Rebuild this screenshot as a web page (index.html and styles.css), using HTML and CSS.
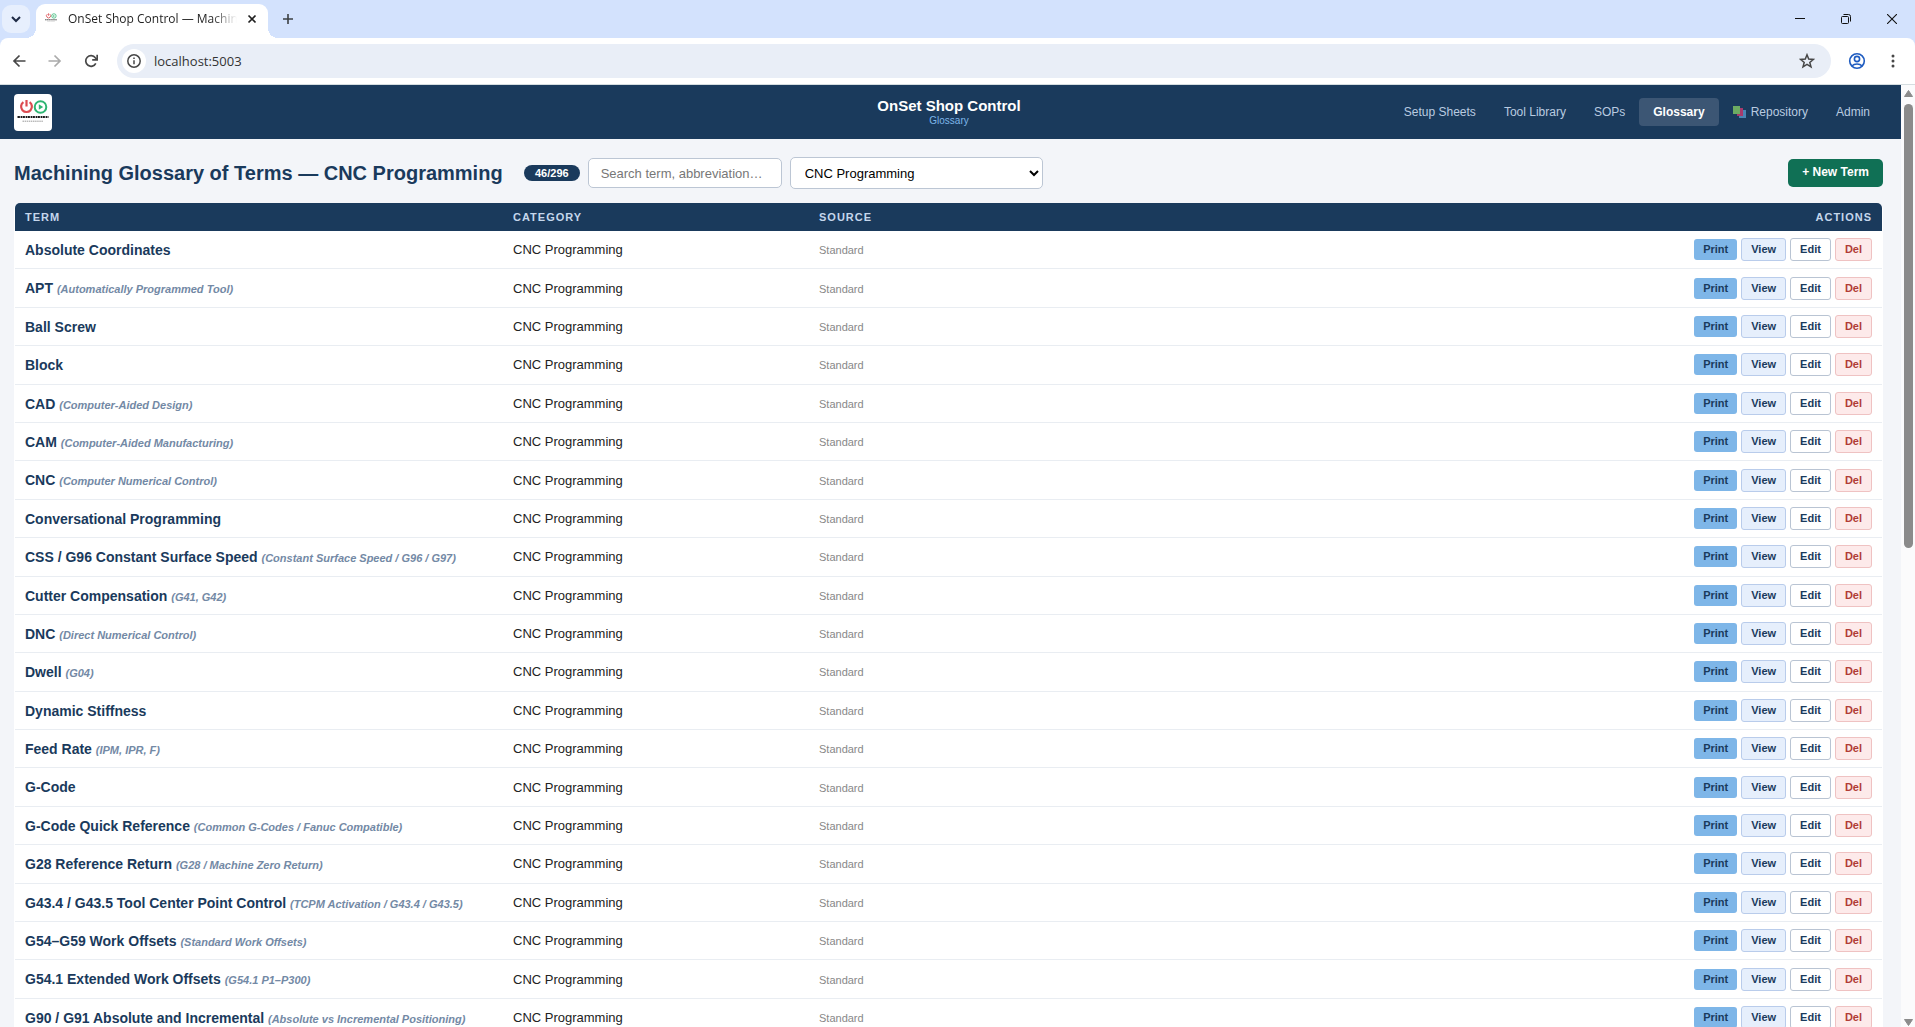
FILE: index.html
```html
<!DOCTYPE html>
<html lang="en">
<head>
<meta charset="utf-8">
<title>OnSet Shop Control — Machining Glossary</title>
<link rel="stylesheet" href="styles.css">
</head>
<body>
<svg class="defs" aria-hidden="true">
  <symbol id="logo" viewBox="0 0 38 37">
    <path d="M9.400 8.200a5.400 5.400 0 1 0 6.200 0" fill="none" stroke="#dc4b50" stroke-width="2.200"/>
    <path d="M12.500 6v6.500" stroke="#dc4b50" stroke-width="2.200"/>
    <circle cx="26.500" cy="13" r="5.800" fill="none" stroke="#2fb573" stroke-width="2"/>
    <path d="M24.800 10.200v5.600l4.400-2.800z" fill="#2fb573"/>
    <path d="M3.500 23h31" stroke="#1c1c1c" stroke-width="2.200" stroke-dasharray="2.400 .7 1.400 .5"/>
    <path d="M8.500 27.200h21" stroke="#999" stroke-width="1" stroke-dasharray="1.500 .6"/>
  </symbol>
</svg>

<div class="tabstrip">
  <button class="tab-search" aria-label="Search tabs"><svg width="12" height="12" viewBox="0 0 12 12"><path d="M2 4l4 4 4-4" fill="none" stroke="#1f2b45" stroke-width="2"/></svg></button>
  <div class="tab">
    <svg class="favicon" viewBox="2 2 34 30"><use href="#logo"/></svg>
    <span class="tab-title">OnSet Shop Control — Machining Glossary</span>
    <button class="icon-btn tab-close" aria-label="Close tab"><svg width="10" height="10" viewBox="0 0 10 10"><path d="M1.500 1.500l7 7M8.500 1.500l-7 7" stroke="#1f1f1f" stroke-width="1.700"/></svg></button>
  </div>
  <button class="icon-btn new-tab" aria-label="New tab"><svg width="12" height="12" viewBox="0 0 12 12"><path d="M6 1v10M1 6h10" stroke="#3c4043" stroke-width="1.600"/></svg></button>
  <div class="window-controls">
    <button class="icon-btn" aria-label="Minimize"><svg width="10" height="10" viewBox="0 0 10 10"><path d="M0 4.500h10" stroke="#111"/></svg></button>
    <button class="icon-btn" aria-label="Restore"><svg width="10" height="10" viewBox="0 0 10 10" fill="none" stroke="#111"><rect x=".5" y="2.500" width="7" height="7" rx="1"/><path d="M2.500 .5h5a2 2 0 0 1 2 2v5"/></svg></button>
    <button class="icon-btn" aria-label="Close"><svg width="10" height="10" viewBox="0 0 10 10"><path d="M0 0l10 10M10 0L0 10" stroke="#111" stroke-width="1.100"/></svg></button>
  </div>
</div>

<div class="toolbar">
  <button class="icon-btn" aria-label="Back"><svg width="14" height="14" viewBox="0 0 14 14"><path d="M13.500 7H2M7.500 1.500L2 7l5.500 5.500" fill="none" stroke="#474747" stroke-width="1.700"/></svg></button>
  <button class="icon-btn" aria-label="Forward"><svg width="14" height="14" viewBox="0 0 14 14"><path d="M.5 7H12M6.500 1.500L12 7l-5.500 5.500" fill="none" stroke="#ababab" stroke-width="1.700"/></svg></button>
  <button class="icon-btn" aria-label="Reload"><svg width="14" height="14" viewBox="0 0 14 14"><path d="M11.800 9.300A5.300 5.300 0 1 1 11.300 3.800L12.800 5.300" fill="none" stroke="#474747" stroke-width="1.700"/><path d="M13.200 .8v5h-5" fill="none" stroke="#474747" stroke-width="1.700"/></svg></button>
  <div class="omnibox">
    <span class="site-info"><svg width="14" height="14" viewBox="0 0 14 14"><circle cx="7" cy="7" r="6.200" fill="none" stroke="#474747" stroke-width="1.500"/><path d="M7 6.200v4M7 3.600v1.500" stroke="#474747" stroke-width="1.500"/></svg></span>
    <input class="url" type="text" aria-label="Address" value="localhost:5003">
    <button class="icon-btn" aria-label="Bookmark"><svg width="16" height="16" viewBox="0 0 16 16"><path d="M8 1.800l1.700 4.300 4.700.3-3.600 3 1.200 4.500L8 11.400l-4 2.500 1.200-4.500-3.600-3 4.700-.3z" fill="none" stroke="#474747" stroke-width="1.500"/></svg></button>
  </div>
  <button class="icon-btn" aria-label="Profile"><svg width="18" height="18" viewBox="0 0 18 18" fill="none" stroke="#1f5cc0" stroke-width="1.600"><circle cx="9" cy="9" r="7.300"/><circle cx="9" cy="7" r="2.600"/><path d="M3.800 14c2.700-2.700 7.700-2.700 10.400 0"/></svg></button>
  <button class="icon-btn menu-btn" aria-label="Menu"><svg width="4" height="14" viewBox="0 0 4 14" fill="#474747"><circle cx="2" cy="2" r="1.500"/><circle cx="2" cy="7" r="1.500"/><circle cx="2" cy="12" r="1.500"/></svg></button>
</div>

<div class="viewport">
  <div class="page">
    <header class="app-header">
      <a class="logo" href="#" aria-label="Home"><svg width="38" height="37"><use href="#logo"/></svg></a>
      <div class="brand"><strong>OnSet Shop Control</strong><span>Glossary</span></div>
      <nav class="nav">
        <a href="#">Setup Sheets</a>
        <a href="#">Tool Library</a>
        <a href="#">SOPs</a>
        <a href="#" class="active">Glossary</a>
        <a href="#"><svg width="13" height="12" viewBox="0 0 13 12"><path d="M6 4h7v8H6z" fill="#4b84b4"/><path d="M4 2h6v8H4z" fill="#a83a6c"/><path d="M0 0h7v8H0z" fill="#6cab62"/></svg>Repository</a>
        <a href="#">Admin</a>
      </nav>
    </header>
    <main class="content">
      <div class="filters">
        <h1>Machining Glossary of Terms — CNC Programming</h1>
        <span class="count">46/296</span>
        <input class="search" type="text" placeholder="Search term, abbreviation…" aria-label="Search terms">
        <select class="category" aria-label="Category"><option>CNC Programming</option></select>
        <button class="new-term">+ New Term</button>
      </div>
      <div class="table-wrap">
        <table>
          <colgroup><col class="col-term"><col class="col-category"><col><col></colgroup>
          <thead><tr><th>Term</th><th>Category</th><th>Source</th><th class="actions">Actions</th></tr></thead>
          <tbody id="terms"></tbody>
        </table>
      </div>
    </main>
  </div>
  <div class="scrollbar" aria-hidden="true">
    <svg width="9" height="7" viewBox="0 0 9 7"><path d="M4.500 0.500L8.500 6.500H.5z" fill="#8b8b8b" stroke="#8b8b8b" stroke-linejoin="round"/></svg>
    <div class="track"><div class="thumb"></div></div>
    <svg width="9" height="7" viewBox="0 0 9 7"><path d="M4.500 6.500L8.500 .5H.5z" fill="#8b8b8b" stroke="#8b8b8b" stroke-linejoin="round"/></svg>
  </div>
</div>
<script src="script.js"></script>
</body>
</html>
```
FILE: styles.css
```css
* { box-sizing: border-box; }

body {
  margin: 0;
  height: 100vh;
  display: flex;
  flex-direction: column;
  overflow: hidden;
  background: #d3e2fd;
  color: #222;
  font: 13px/1.6 "Liberation Sans", Arial, sans-serif;
}

button, input, select { font: inherit; }
.defs { position: absolute; width: 0; height: 0; }
svg { display: block; flex: none; }

/* Browser frame */
.icon-btn {
  display: grid;
  place-items: center;
  width: 36px;
  height: 34px;
  padding: 0;
  border: 0;
  background: none;
}
.tabstrip {
  display: flex;
  align-items: center;
  height: 38px;
  flex: none;
  padding-left: 2px;
}
.tab-search {
  display: grid;
  place-items: center;
  width: 28px;
  height: 28px;
  margin-right: 6px;
  padding: 0;
  border: 0;
  border-radius: 9px;
  background: #e7effd;
}
.tab {
  position: relative;
  display: flex;
  align-items: center;
  align-self: flex-end;
  width: 232px;
  height: 34px;
  padding: 0 7px 4px 8px;
  border-radius: 9px 9px 0 0;
  background: #fff;
}
.tab::before, .tab::after {
  content: "";
  position: absolute;
  bottom: 0;
  width: 10px;
  height: 10px;
}
.tab::before { left: -10px; background: radial-gradient(circle at 0 0, transparent 10px, #fff 10px); }
.tab::after { right: -10px; background: radial-gradient(circle at 100% 0, transparent 10px, #fff 10px); }
.favicon { width: 16px; height: 16px; margin-right: 8px; }
.tab-title {
  flex: 1;
  overflow: hidden;
  white-space: nowrap;
  color: #1f1f1f;
  font: 12px/20px "Open Sans", sans-serif;
  -webkit-mask-image: linear-gradient(90deg, #000 85%, transparent);
  mask-image: linear-gradient(90deg, #000 85%, transparent);
}
.tab-close { width: 18px; height: 18px; margin-left: 6px; }
.new-tab { margin-left: 2px; }
.window-controls { display: flex; margin-left: auto; }
.window-controls .icon-btn { width: 46px; }

.toolbar {
  display: flex;
  align-items: center;
  height: 47px;
  flex: none;
  padding: 0 4px 0 1px;
  border-bottom: 1px solid #d5dde0;
  border-radius: 8px 8px 0 0;
  background: #fff;
}
.omnibox {
  display: flex;
  align-items: center;
  flex: 1;
  height: 34px;
  margin: 0 8px;
  padding: 0 6px 0 5px;
  border-radius: 17px;
  background: #e9eef7;
}
.site-info {
  display: grid;
  place-items: center;
  width: 24px;
  height: 24px;
  border-radius: 50%;
  background: #fff;
}
.url {
  flex: 1;
  padding: 0 8px;
  border: 0;
  background: none;
  color: #333;
  font: 13px/20px "Open Sans", sans-serif;
}
.toolbar .menu-btn { width: 36px; }

/* Page */
.viewport { display: flex; flex: 1; min-height: 0; background: #fbfbfc; }
.page { flex: 1; overflow: hidden; background: #f3f5f9; }
.scrollbar {
  display: flex;
  flex-direction: column;
  align-items: center;
  width: 14px;
  padding: 5px 0 1px;
}
.track { flex: 1; padding: 7px 0 8px; }
.thumb { width: 9px; height: 49%; border-radius: 5px; background: #8b8b8b; }

.app-header {
  display: grid;
  grid-template-columns: 1fr auto 1fr;
  align-items: center;
  height: 54px;
  padding: 0 17px 0 14px;
  background: #1a3a5c;
}
.logo { justify-self: start; overflow: hidden; border-radius: 4px; background: #fff; }
.brand { display: flex; flex-direction: column; align-items: center; text-align: center; }
.brand strong { color: #fff; font-size: 15px; line-height: 18px; }
.brand span { color: #7eb6e8; font-size: 10px; line-height: 12px; }
.nav { display: flex; justify-content: flex-end; }
.nav a {
  display: flex;
  align-items: center;
  gap: 5px;
  padding: 0 14px;
  border-radius: 4px;
  color: #b9cbe0;
  font-size: 12px;
  line-height: 28px;
  text-decoration: none;
  white-space: nowrap;
}
.nav .active { background: #3c5674; color: #fff; font-weight: bold; }

.content { padding: 18px 18px 0 14px; }
.filters { display: flex; align-items: center; gap: 8px; margin-bottom: 14px; }
h1 { flex: 0 0 502px; margin: 0; color: #1a3a5c; font-size: 20px; line-height: 32px; white-space: nowrap; }
.count {
  padding: 0 11px;
  border-radius: 8px;
  background: #1a3a5c;
  color: #fff;
  font-size: 11px;
  font-weight: bold;
  line-height: 16px;
}
.search, .category {
  border: 1px solid #bcc6d4;
  border-radius: 5px;
  background: #fff;
}
.search { width: 194px; height: 30px; padding: 0 12px; color: #222; }
.search::placeholder { color: #777; }
.category { width: 253px; height: 32px; padding: 0 10px; color: #000; }
.new-term {
  height: 28px;
  margin-left: auto;
  padding: 0 14px;
  border: 0;
  border-radius: 5px;
  background: #107055;
  color: #fff;
  font-size: 12px;
  font-weight: bold;
}

.table-wrap { padding: 0 1px; border-radius: 6px; background: #fff; }
table { width: 100%; border-collapse: separate; border-spacing: 0; table-layout: fixed; }
.col-term { width: 488px; }
.col-category { width: 306px; }
th {
  padding: 0 10px;
  background: #1a3a5c;
  color: #c5d7ec;
  font-size: 11px;
  line-height: 28px;
  text-align: left;
  text-transform: uppercase;
  letter-spacing: 1px;
}
th:first-child { border-top-left-radius: 5px; }
th:last-child { border-top-right-radius: 5px; }
td {
  height: 38px;
  padding: 8px 10px 7px;
  border-bottom: 1px solid #e9edf2;
  font-size: 13px;
  line-height: 22px;
  white-space: nowrap;
}
.term { color: #1a3a5c; font-size: 14px; font-weight: bold; line-height: 1.6; }
.term em { color: #7389a5; font-size: 11px; line-height: 1; }
.source { color: #888; font-size: 11px; }
.actions { text-align: right; }
td.actions { padding-top: 0; padding-bottom: 0; }
.buttons { display: flex; justify-content: flex-end; align-items: center; gap: 4px; }
.btn {
  padding: 0 9px;
  border: 1px solid;
  border-radius: 3px;
  font-size: 11px;
  font-weight: bold;
  line-height: 21px;
}
.print { padding: 0 9px; border: 0; background: #7eb6e8; color: #1a3a5c; }
.view { border-color: #b9cceb; background: #e6effc; color: #1a3a5c; }
.edit { border-color: #b9c4d3; background: #fff; color: #1a3a5c; }
.del { border-color: #efc2c2; background: #fdeaea; color: #b13c36; }
```
FILE: script.js
```js
const terms = [
  ["Absolute Coordinates"],
  ["APT", "Automatically Programmed Tool"],
  ["Ball Screw"],
  ["Block"],
  ["CAD", "Computer-Aided Design"],
  ["CAM", "Computer-Aided Manufacturing"],
  ["CNC", "Computer Numerical Control"],
  ["Conversational Programming"],
  ["CSS / G96 Constant Surface Speed", "Constant Surface Speed / G96 / G97"],
  ["Cutter Compensation", "G41, G42"],
  ["DNC", "Direct Numerical Control"],
  ["Dwell", "G04"],
  ["Dynamic Stiffness"],
  ["Feed Rate", "IPM, IPR, F"],
  ["G-Code"],
  ["G-Code Quick Reference", "Common G-Codes / Fanuc Compatible"],
  ["G28 Reference Return", "G28 / Machine Zero Return"],
  ["G43.4 / G43.5 Tool Center Point Control", "TCPM Activation / G43.4 / G43.5"],
  ["G54–G59 Work Offsets", "Standard Work Offsets"],
  ["G54.1 Extended Work Offsets", "G54.1 P1–P300"],
  ["G90 / G91 Absolute and Incremental", "Absolute vs Incremental Positioning"]
];

document.getElementById("terms").innerHTML = terms.map(([name, note]) => `
  <tr>
    <td class="term">${name}${note ? ` <em>(${note})</em>` : ""}</td>
    <td>CNC Programming</td>
    <td class="source">Standard</td>
    <td class="actions"><div class="buttons">
      <button class="btn print">Print</button>
      <button class="btn view">View</button>
      <button class="btn edit">Edit</button>
      <button class="btn del">Del</button>
    </div></td>
  </tr>`).join("");
```
